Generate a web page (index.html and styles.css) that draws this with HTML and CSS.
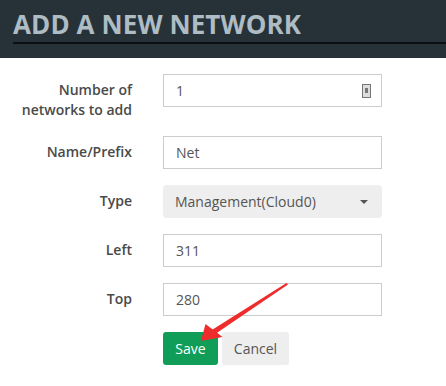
FILE: index.html
```html
<!DOCTYPE html>
<html lang="en">
<head>
    <meta charset="UTF-8">
    <title>Add a new network</title>
    <link rel="stylesheet" href="styles.css">
</head>
<body>
    <header class="header">
        <h1 class="title">ADD A NEW NETWORK</h1>
    </header>

    <main class="content">
        <form class="net-form">
            <label class="label" for="count">Number of<br>networks to add</label>
            <div class="field number-field">
                <input id="count" class="bare-input" type="text" value="1">
                <span class="spin"><span class="spin-dot"></span></span>
            </div>

            <label class="label" for="prefix">Name/Prefix</label>
            <input id="prefix" class="field" type="text" value="Net">

            <label class="label">Type</label>
            <div class="select">
                <span>Management(Cloud0)</span>
                <span class="caret"></span>
            </div>

            <label class="label" for="left">Left</label>
            <input id="left" class="field" type="text" value="311">

            <label class="label" for="top">Top</label>
            <input id="top" class="field" type="text" value="280">

            <div></div>
            <div class="actions">
                <button type="button" class="btn btn-save">Save</button>
                <button type="button" class="btn btn-cancel">Cancel</button>
            </div>
        </form>
    </main>

    <!-- red annotation arrow -->
    <svg class="arrow" width="446" height="386" viewBox="0 0 446 386">
        <polygon points="286.5,283 288,284.6 214.5,334.5 211,330.5" fill="#ee2c2c"/>
        <polygon points="201,341 205.5,324 222.5,337" fill="#ee2c2c"/>
    </svg>
</body>
</html>
```

FILE: styles.css
```css
* {
    margin: 0;
    padding: 0;
    box-sizing: border-box;
}

body {
    font-family: 'Open Sans', 'DejaVu Sans', sans-serif;
    font-size: 14px;
    background-color: #ffffff;
    color: #444444;
    position: relative;
    height: 386px;
    overflow: hidden;
}

.header {
    background-color: #263238;
    height: 58px;
    padding: 8px 0 0 13px;
}

.title {
    font-size: 26px;
    font-weight: 700;
    line-height: 33px;
    color: #aebcc4;
    letter-spacing: 0.1px;
    border-bottom: 2px solid #0b0f12;
    height: 36px;
}

.content {
    padding-top: 16px;
}

.net-form {
    display: grid;
    grid-template-columns: 132px 219px;
    column-gap: 31px;
    row-gap: 16px;
    align-items: start;
}

.label {
    text-align: right;
    font-weight: 600;
    line-height: 20px;
    padding-top: 6px;
    color: #4a4a4a;
}

.field {
    height: 33px;
    border: 1px solid #cccccc;
    background-color: #ffffff;
    font-family: inherit;
    font-size: 14px;
    color: #555555;
    padding: 0 12px;
    width: 100%;
}

.number-field {
    display: flex;
    align-items: center;
    padding-right: 10px;
}

.bare-input {
    border: none;
    outline: none;
    font-family: inherit;
    font-size: 14px;
    color: #555555;
    flex: 1;
    min-width: 0;
}

.spin {
    width: 9px;
    height: 14px;
    border: 1px solid #777777;
    background-color: #dddddd;
    display: flex;
    justify-content: center;
    padding-top: 3px;
}

.spin-dot {
    width: 3px;
    height: 5px;
    background-color: #777777;
}

.select {
    height: 33px;
    background-color: #eeeeee;
    border-radius: 4px;
    display: flex;
    align-items: center;
    justify-content: space-between;
    padding: 0 14px 0 12px;
    color: #555555;
}

.caret {
    width: 0;
    height: 0;
    border-left: 4px solid transparent;
    border-right: 4px solid transparent;
    border-top: 4px solid #555555;
}

.actions {
    display: flex;
    gap: 4px;
}

.btn {
    height: 33px;
    border: none;
    border-radius: 3px;
    font-family: inherit;
    font-size: 14px;
    cursor: pointer;
}

.btn-save {
    width: 55px;
    background-color: #0f9d58;
    color: #ffffff;
}

.btn-cancel {
    width: 67px;
    background-color: #eeeeee;
    color: #555555;
}

.arrow {
    position: absolute;
    left: 0;
    top: 0;
    pointer-events: none;
}
```
